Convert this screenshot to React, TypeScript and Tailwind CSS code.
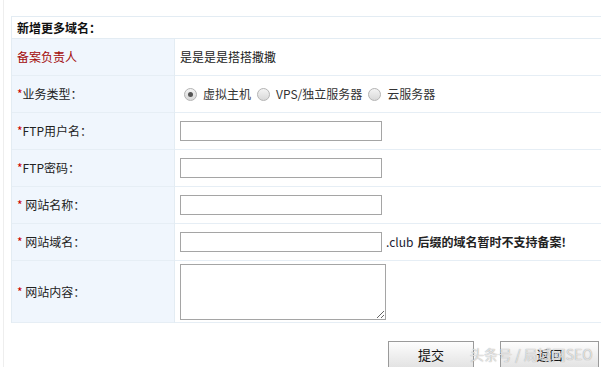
import React from 'react';

const font = { fontFamily: '"Noto Sans CJK SC", "Liberation Sans", sans-serif' };

type Row = { label: string; star?: boolean; red?: boolean; kind: 'text' | 'radio' | 'input' | 'domain' | 'area'; value?: string };

const rows: Row[] = [
  { label: '备案负责人', red: true, kind: 'text', value: '是是是是搭搭撒撒' },
  { label: '业务类型：', star: true, kind: 'radio' },
  { label: 'FTP用户名：', star: true, kind: 'input' },
  { label: 'FTP密码：', star: true, kind: 'input' },
  { label: ' 网站名称：', star: true, kind: 'input' },
  { label: ' 网站域名：', star: true, kind: 'domain' },
  { label: ' 网站内容：', star: true, kind: 'area' },
];

function Radio({ checked, label }: { checked?: boolean; label: string }) {
  return (
    <span className="flex items-center">
      <span className="mx-[4px] flex h-[13px] w-[13px] items-center justify-center rounded-full border border-[#b5b5b5] bg-gradient-to-b from-[#f4f4f4] to-[#d8d8d8]">
        {checked && <span className="h-[5px] w-[5px] rounded-full bg-[#555]" />}
      </span>
      <span className="ml-[2px] mr-[2px]">{label}</span>
    </span>
  );
}

const inputCls = 'block h-[20px] w-[202px] border border-[#a5a5a5] bg-white';

export default function App() {
  return (
    <div className="relative h-[367px] w-[601px] overflow-hidden bg-white text-[12px] text-[#333]" style={font}>
      <div className="absolute left-[3px] top-0 h-full w-px bg-[#eee]" />
      <div className="pl-[11px] pt-[16px]">
        <table className="w-[600px] border-collapse">
          <tbody>
            <tr className="h-[22px] border-y border-[#e3ecf3]">
              <td colSpan={2} className="border-l border-[#e3ecf3] pl-[5px] font-bold text-[#111]">新增更多域名：</td>
            </tr>
            {rows.map((r) => (
              <tr key={r.label} className={`${r.kind === 'area' ? 'h-[62px]' : 'h-[37px]'} border-b border-[#e6eef5]`}>
                <td className="w-[163px] border-l border-r border-[#e3ecf3] bg-[#f0f6fd] pl-[5px] text-[#222]">
                  {r.star && <span className="text-[#c00]">*</span>}
                  <span className={r.red ? 'text-[#a30a0a]' : ''}>{r.label}</span>
                </td>
                <td className="pl-[5px]">
                  {r.kind === 'text' && <span className="text-[#222]">{r.value}</span>}
                  {r.kind === 'radio' && (
                    <div className="flex items-center text-[#333]">
                      <Radio checked label="虚拟主机" />
                      <Radio label="VPS/独立服务器" />
                      <Radio label="云服务器" />
                    </div>
                  )}
                  {r.kind === 'input' && <input className={inputCls} />}
                  {r.kind === 'domain' && (
                    <div className="flex items-center">
                      <input className={inputCls} />
                      <span className="ml-[4px] text-[#223]">.club</span>
                      <span className="ml-[4px] font-bold text-[#222]">后缀的域名暂时不支持备案!</span>
                    </div>
                  )}
                  {r.kind === 'area' && <textarea className="block h-[56px] w-[206px] resize border border-[#a5a5a5] bg-white" />}
                </td>
              </tr>
            ))}
          </tbody>
        </table>
        <div className="mt-[18px] flex pl-[377px]">
          <button className="h-[28px] w-[86px] border border-[#9a9a9a] bg-gradient-to-b from-[#fdfdfd] to-[#e2e2e2] text-[13px] text-[#111]">提交</button>
          <button className="ml-[26px] h-[28px] w-[99px] border border-[#9a9a9a] bg-gradient-to-b from-[#fdfdfd] to-[#e2e2e2] text-[13px] text-[#111]">返回</button>
        </div>
      </div>
      <div className="pointer-events-none absolute left-[470px] top-[344px] text-[14px] text-white/70 [text-shadow:0_0_1px_#888]">头条号 / 局域网SEO</div>
    </div>
  );
}
